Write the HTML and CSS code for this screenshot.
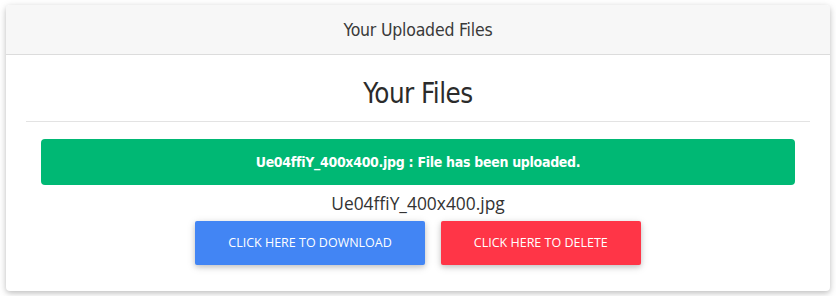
FILE: index.html
```html
<!DOCTYPE html>
<html lang="en">

<head>
    <meta charset="UTF-8">
    <meta name="viewport" content="width=device-width, initial-scale=1.0">
    <title>Your Uploaded Files</title>
    <link rel="stylesheet" href="styles.css">
</head>

<body>
    <div class="card">
        <div class="card-header">Your Uploaded Files</div>
        <div class="card-body">
            <h2 class="title">Your Files</h2>
            <hr class="divider">
            <div class="files">
                <div class="alert-success">Ue04ffiY_400x400.jpg : File has been uploaded.</div>
                <div class="file-name">Ue04ffiY_400x400.jpg</div>
                <div class="actions">
                    <a class="btn btn-primary" href="#">Click here to download</a>
                    <a class="btn btn-danger" href="#">Click here to delete</a>
                </div>
            </div>
        </div>
    </div>
</body>

</html>
```

FILE: styles.css
```css
body {
    margin: 0;
    padding: 5px 6px;
    background-color: #fff;
    font-family: "Open Sans", "Noto Sans", sans-serif;
    color: #333;
}

.card {
    background-color: #fff;
    border-radius: 4px;
    box-shadow: 0 2px 5px 0 rgba(0, 0, 0, 0.16), 0 2px 10px 0 rgba(0, 0, 0, 0.12);
    overflow: hidden;
}

.card-header {
    height: 49px;
    line-height: 50px;
    text-align: center;
    background-color: #f7f7f7;
    border-bottom: 1px solid #dcdcdc;
    font-family: "DejaVu Sans Condensed", "Noto Sans", sans-serif;
    font-weight: 300;
    font-size: 17.5px;
    color: #3a3a3a;
    letter-spacing: -0.2px;
}

.card-body {
    padding: 18px 20px 26px;
}

.title {
    margin: 0;
    text-align: center;
    font-family: "DejaVu Sans Condensed", "Noto Sans", sans-serif;
    font-weight: 300;
    font-size: 27.5px;
    line-height: 40px;
    color: #2b2b2b;
    letter-spacing: -0.5px;
}

.divider {
    margin: 8px 0 17px;
    border: none;
    border-top: 1px solid #e3e3e3;
}

.files {
    padding: 0 15px;
    display: flex;
    flex-direction: column;
    align-items: center;
}

.alert-success {
    align-self: stretch;
    height: 46px;
    line-height: 46px;
    background-color: #00b874;
    border-radius: 4px;
    color: #fff;
    text-align: center;
    font-family: "DejaVu Sans Condensed", "Noto Sans", sans-serif;
    font-weight: bold;
    font-size: 14px;
    letter-spacing: -0.3px;
}

.file-name {
    margin-top: 7px;
    font-size: 17.4px;
    line-height: 22px;
    color: #333;
}

.actions {
    margin-top: 7px;
    display: flex;
    gap: 16px;
}

.btn {
    display: block;
    height: 44px;
    line-height: 44px;
    padding: 0 33px;
    border-radius: 2px;
    color: #fff;
    text-decoration: none;
    text-transform: uppercase;
    font-size: 12.5px;
    box-shadow: 0 2px 5px 0 rgba(0, 0, 0, 0.16), 0 2px 10px 0 rgba(0, 0, 0, 0.12);
}

.btn-primary {
    background-color: #4285f4;
}

.btn-danger {
    background-color: #ff3547;
}
```
